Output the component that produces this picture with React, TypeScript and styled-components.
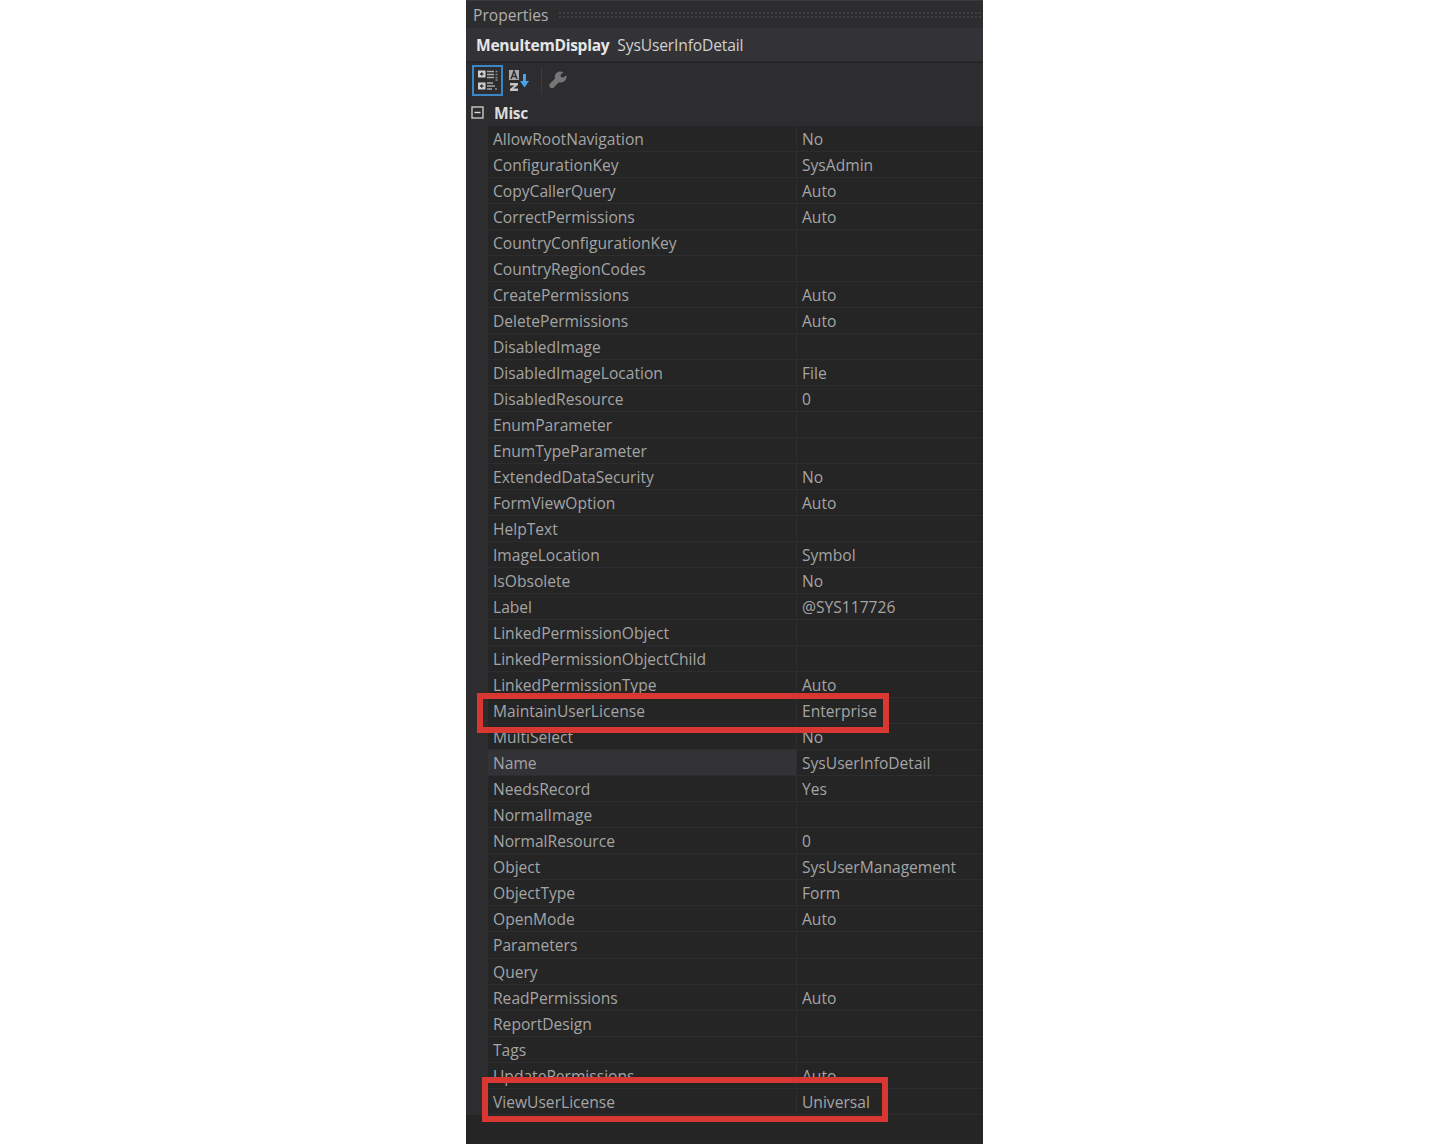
import React, {FC} from "react";
import styled, {createGlobalStyle} from 'styled-components';

const GlobalStyle = createGlobalStyle`
  html, body { margin: 0; padding: 0; background: #fff; }
  body { font-family: "Open Sans", "Noto Sans", sans-serif; }
`;

const Page = styled.div`
  width: 1430px;
  height: 1144px;
  padding-left: 466px;
  box-sizing: border-box;
  overflow: hidden;
`;

const Panel = styled.div`
  position: relative;
  width: 517px;
  height: 1144px;
  background: #252526;
  color: #a4a4a4;
  font-size: 15.6px;
  overflow: hidden;
`;

const TitleBar = styled.div`
  height: 28px;
  padding: 0 0 0 7px;
  background: #2d2d30;
  border-top: 1px solid #3a3a3d;
  box-sizing: border-box;
  display: flex;
  align-items: center;
  gap: 9px;
  color: #aeaeae;
`;

const Grip = styled.div`
  flex: 1;
  height: 8px;
  background-image: radial-gradient(#404044 0.9px, transparent 1px);
  background-size: 4px 4px;
`;

const ObjectBar = styled.div`
  height: 35px;
  padding: 0 0 0 10px;
  background: #333337;
  border-bottom: 2px solid #262627;
  box-sizing: border-box;
  display: flex;
  align-items: center;
  gap: 8px;
  color: #d0d0d0;
  white-space: nowrap;
`;

const ObjectType = styled.b`
  color: #e6e6e6;
  font-weight: 700;
  letter-spacing: -0.3px;
`;

const ObjectName = styled.span`
  letter-spacing: -0.15px;
`;

const Toolbar = styled.div`
  height: 37px;
  padding: 0 0 3px 6px;
  box-sizing: border-box;
  background: #2d2d30;
  display: flex;
  align-items: center;
`;

const ToolButton = styled.div<{active?: boolean; wide?: number}>`
  width: ${({wide}) => wide || 22}px;
  height: 31px;
  box-sizing: border-box;
  border: 2px solid ${({active}) => active ? '#3a87c8' : 'transparent'};
  display: flex;
  align-items: center;
  justify-content: center;
  margin-right: 3px;
`;

const ToolSep = styled.div`
  width: 1px;
  height: 27px;
  margin: 0 5px 0 6px;
  background: #3b3b3e;
`;

const CategoryRow = styled.div`
  height: 26px;
  padding-left: 5px;
  background: #2d2d30;
  display: flex;
  align-items: center;
  gap: 9px;
  color: #dcdcdc;
`;

const CategoryName = styled.b`
  font-weight: 700;
  letter-spacing: -0.3px;
`;

const Grid = styled.div`
  background: linear-gradient(90deg, #2d2d30 22px, transparent 22px);
`;

const Row = styled.div`
  height: 26.02px;
  margin-left: 22px;
  display: grid;
  grid-template-columns: 309px 1fr;
  box-sizing: border-box;
  border-bottom: 1px solid #2d2d30;
  white-space: nowrap;
`;

const Cell = styled.div<{selected?: boolean}>`
  padding-left: 5px;
  line-height: 27px;
  overflow: hidden;
  background: ${({selected}) => selected ? '#333337' : 'transparent'};
  border-right: 1px solid #2d2d30;
  &:last-child { border-right: 0; }
`;

const Highlight = styled.div`
  position: absolute;
  border: 6px solid #d93732;
  box-sizing: border-box;
`;

const MaintainBox = styled(Highlight)`
  left: 11px;
  top: 693px;
  width: 412px;
  height: 40px;
`;

const ViewBox = styled(Highlight)`
  left: 16px;
  top: 1077px;
  width: 406px;
  height: 45px;
`;

const props: [string, string][] = [
  ['AllowRootNavigation', 'No'],
  ['ConfigurationKey', 'SysAdmin'],
  ['CopyCallerQuery', 'Auto'],
  ['CorrectPermissions', 'Auto'],
  ['CountryConfigurationKey', ''],
  ['CountryRegionCodes', ''],
  ['CreatePermissions', 'Auto'],
  ['DeletePermissions', 'Auto'],
  ['DisabledImage', ''],
  ['DisabledImageLocation', 'File'],
  ['DisabledResource', '0'],
  ['EnumParameter', ''],
  ['EnumTypeParameter', ''],
  ['ExtendedDataSecurity', 'No'],
  ['FormViewOption', 'Auto'],
  ['HelpText', ''],
  ['ImageLocation', 'Symbol'],
  ['IsObsolete', 'No'],
  ['Label', '@SYS117726'],
  ['LinkedPermissionObject', ''],
  ['LinkedPermissionObjectChild', ''],
  ['LinkedPermissionType', 'Auto'],
  ['MaintainUserLicense', 'Enterprise'],
  ['MultiSelect', 'No'],
  ['Name', 'SysUserInfoDetail'],
  ['NeedsRecord', 'Yes'],
  ['NormalImage', ''],
  ['NormalResource', '0'],
  ['Object', 'SysUserManagement'],
  ['ObjectType', 'Form'],
  ['OpenMode', 'Auto'],
  ['Parameters', ''],
  ['Query', ''],
  ['ReadPermissions', 'Auto'],
  ['ReportDesign', ''],
  ['Tags', ''],
  ['UpdatePermissions', 'Auto'],
  ['ViewUserLicense', 'Universal'],
];

const CategorizedIcon: FC = () => (
  <svg width="22" height="22" viewBox="0 0 22 22">
    <rect x="1" y="1.500" width="7.500" height="7" fill="#cfcfcf" />
    <path d="M3 5h3.500M4.750 3.200v3.600" stroke="#333" strokeWidth="1.300" />
    <rect x="1" y="13.500" width="7.500" height="7" fill="#cfcfcf" />
    <path d="M3 17h3.500M4.750 15.200v3.600" stroke="#333" strokeWidth="1.300" />
    <path d="M10 2.500h7M10 5.500h7M10 8.500h7M10 14h6M10 17h8M10 20h5" stroke="#a8a8a8" strokeWidth="1.600" />
    <path d="M18.500 2.500h2M18.500 5.500h2M18.500 8.500h2M18.500 11h2M18 20h2" stroke="#8a8a8a" strokeWidth="1.600" />
  </svg>
);

const SortIcon: FC = () => (
  <svg width="22" height="22" viewBox="0 0 22 22">
    <rect x="1" y="1" width="10" height="10" fill="#a8a8a8" />
    <path d="M3 10l3-8 3 8M4.200 7.500h3.600" stroke="#2d2d30" strokeWidth="1.400" fill="none" />
    <path d="M2 14h8v2l-4.500 3.500H10V22H2v-2l4.500-3.500H2z" fill="#c4c4c4" />
    <path d="M16.500 5v9" stroke="#4aa3e8" strokeWidth="3" />
    <path d="M12 12h9l-4.500 6.500z" fill="#4aa3e8" />
  </svg>
);

const WrenchIcon: FC = () => (
  <svg width="20" height="20" viewBox="0 0 20 20">
    <path d="M12.500 .5C9 .5 6.500 3 6.500 6.500c0 .7.100 1.300.3 1.900L1.200 14c-1.200 1.200-1.200 3 0 4.200s3 1.200 4.200 0l5.600-5.700c.6.200 1.200.3 1.900.3 3.700 0 6.500-2.700 6.500-6.300 0-.7-.1-1.300-.3-1.900L15.500 7.500l-2.500-1V4.200l3-3c-1-.5-2.200-.7-3.500-.7z" fill="#767676" />
  </svg>
);

const CollapseIcon: FC = () => (
  <svg width="14" height="14" viewBox="0 0 14 14">
    <rect x="1" y="1" width="11" height="11" fill="none" stroke="#c8c8c8" strokeWidth="1.400" />
    <path d="M3.500 6.500h6" stroke="#d8d8d8" strokeWidth="1.400" />
  </svg>
);

const App: FC = () => (
  <Page>
    <GlobalStyle />
    <Panel>
      <TitleBar>
        <span>Properties</span>
        <Grip />
      </TitleBar>
      <ObjectBar>
        <ObjectType>MenuItemDisplay</ObjectType>
        <ObjectName>SysUserInfoDetail</ObjectName>
      </ObjectBar>
      <Toolbar>
        <ToolButton active wide={31}><CategorizedIcon /></ToolButton>
        <ToolButton wide={26}><SortIcon /></ToolButton>
        <ToolSep />
        <ToolButton><WrenchIcon /></ToolButton>
      </Toolbar>
      <CategoryRow>
        <CollapseIcon />
        <CategoryName>Misc</CategoryName>
      </CategoryRow>
      <Grid>
        {props.map(([name, value]) => (
          <Row key={name}>
            <Cell selected={name === 'Name'}>{name}</Cell>
            <Cell>{value}</Cell>
          </Row>
        ))}
      </Grid>
      <MaintainBox />
      <ViewBox />
    </Panel>
  </Page>
);

export default App;
